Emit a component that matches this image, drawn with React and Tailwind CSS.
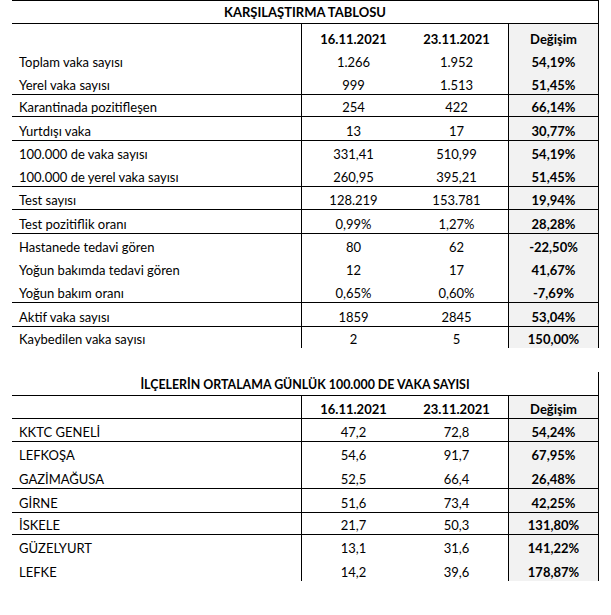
import React from "react";

const t1 = [
  { l: "Toplam vaka sayısı", a: "1.266", b: "1.952", c: "54,19%", h: 23, t: false },
  { l: "Yerel vaka sayısı", a: "999", b: "1.513", c: "51,45%", h: 23, t: false },
  { l: "Karantinada pozitifleşen", a: "254", b: "422", c: "66,14%", h: 22, t: true },
  { l: "Yurtdışı vaka", a: "13", b: "17", c: "30,77%", h: 24, t: true },
  { l: "100.000 de vaka sayısı", a: "331,41", b: "510,99", c: "54,19%", h: 23, t: true },
  { l: "100.000 de yerel vaka sayısı", a: "260,95", b: "395,21", c: "51,45%", h: 23, t: false },
  { l: "Test sayısı", a: "128.219", b: "153.781", c: "19,94%", h: 23, t: true },
  { l: "Test pozitiflik oranı", a: "0,99%", b: "1,27%", c: "28,28%", h: 24, t: true },
  { l: "Hastanede tedavi gören", a: "80", b: "62", c: "-22,50%", h: 23, t: true },
  { l: "Yoğun bakımda tedavi gören", a: "12", b: "17", c: "41,67%", h: 23, t: false },
  { l: "Yoğun bakım oranı", a: "0,65%", b: "0,60%", c: "-7,69%", h: 23, t: false },
  { l: "Aktif vaka sayısı", a: "1859", b: "2845", c: "53,04%", h: 24, t: true },
  { l: "Kaybedilen vaka sayısı", a: "2", b: "5", c: "150,00%", h: 22, t: true },
];

const t2 = [
  { l: "KKTC GENELİ", a: "47,2", b: "72,8", c: "54,24%", h: 23, t: true },
  { l: "LEFKOŞA", a: "54,6", b: "91,7", c: "67,95%", h: 23, t: true },
  { l: "GAZİMAĞUSA", a: "52,5", b: "66,4", c: "26,48%", h: 24, t: false },
  { l: "GİRNE", a: "51,6", b: "73,4", c: "42,25%", h: 24, t: true },
  { l: "İSKELE", a: "21,7", b: "50,3", c: "131,80%", h: 22, t: true },
  { l: "GÜZELYURT", a: "13,1", b: "31,6", c: "141,22%", h: 23, t: true },
  { l: "LEFKE", a: "14,2", b: "39,6", c: "178,87%", h: 24, t: false },
];

function Row({ r }) {
  return (
    <div
      className={
        "grid grid-cols-[289px_104px_103px_90px] border-r border-black " +
        (r.t ? "border-t" : "")
      }
      style={{ height: r.h }}
    >
      <div className="flex items-end pl-[7px] pb-[1px] leading-[16px]">{r.l}</div>
      <div className="flex items-end justify-center pb-[1px] leading-[16px] border-l border-black">{r.a}</div>
      <div className="flex items-end justify-center pb-[1px] leading-[16px]">{r.b}</div>
      <div className="flex items-end justify-center pb-[1px] leading-[16px] border-l border-black bg-[#f2f2f2] font-bold">{r.c}</div>
    </div>
  );
}

function Header({ h }) {
  return (
    <div className="grid grid-cols-[289px_104px_103px_90px] border-r border-black font-bold" style={{ height: h }}>
      <div />
      <div className="flex items-end justify-center pb-[1px] leading-[16px] border-l border-black">16.11.2021</div>
      <div className="flex items-end justify-center pb-[1px] leading-[16px]">23.11.2021</div>
      <div className="flex items-end justify-center pb-[1px] leading-[16px] border-l border-black bg-[#f2f2f2]">Değişim</div>
    </div>
  );
}

export default function App() {
  return (
    <div
      className="w-[611px] h-[615px] bg-white pl-[12px] text-[13px] text-black border-black"
      style={{ fontFamily: "Lato, 'Open Sans', sans-serif" }}
    >
      <div className="w-[587px] border-black [&_*]:border-black">
        <div className="h-[24px] border-t border-b border-r flex items-center justify-center font-bold leading-[16px]">
          KARŞILAŞTIRMA TABLOSU
        </div>
        <Header h={24} />
        {t1.map((r, i) => (
          <Row key={i} r={r} />
        ))}
        <div className="h-[24px]" />
        <div className="h-[24px] border-b border-r flex items-end justify-center pb-[2px] font-bold leading-[16px] text-[12.4px]">
          İLÇELERİN ORTALAMA GÜNLÜK 100.000 DE VAKA SAYISI
        </div>
        <Header h={22} />
        {t2.map((r, i) => (
          <Row key={i} r={r} />
        ))}
      </div>
    </div>
  );
}
